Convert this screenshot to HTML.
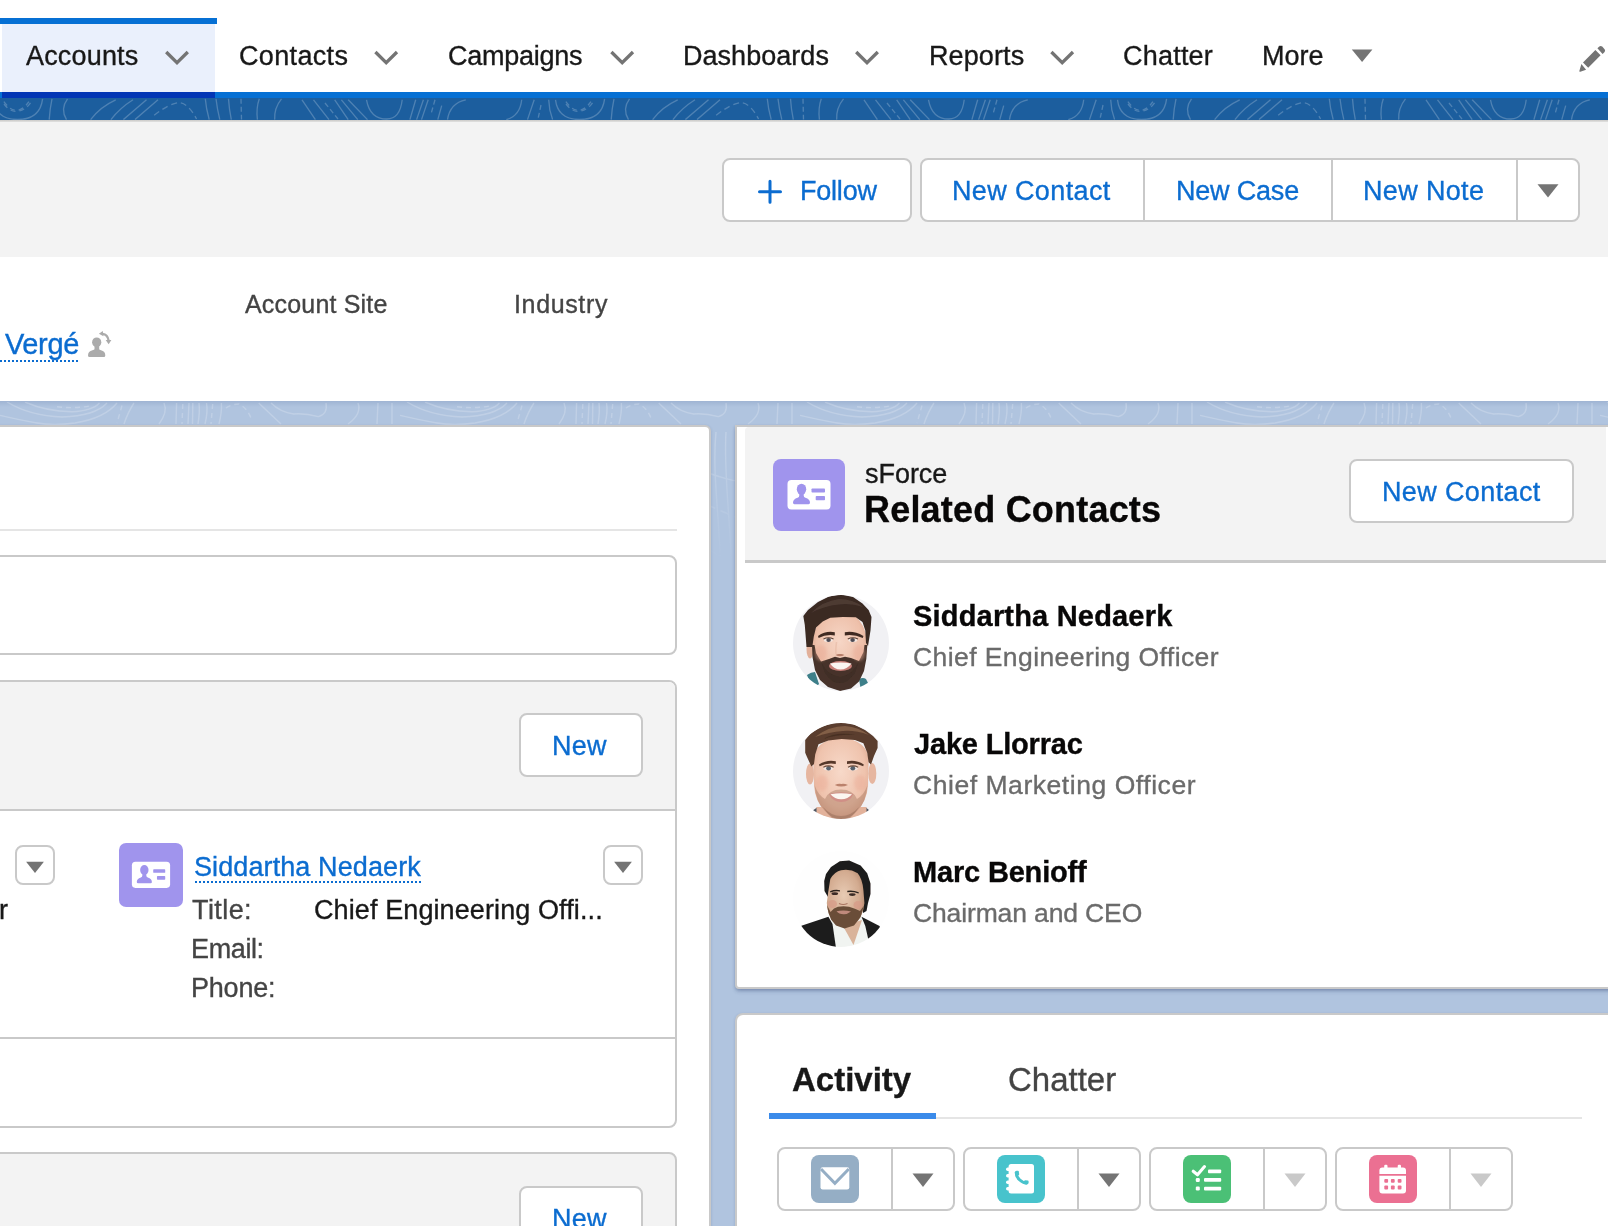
<!DOCTYPE html>
<html lang="en"><head><meta charset="utf-8"><title>sForce | Salesforce</title>
<style>
html,body{margin:0;padding:0}
body{width:1608px;height:1226px;overflow:hidden;position:relative;background:#b0c4df;font-family:"Liberation Sans",sans-serif}
.a{position:absolute;box-sizing:border-box}
.t{-webkit-text-stroke:0.35px;will-change:transform;position:absolute;white-space:nowrap;font-family:"Liberation Sans",sans-serif}
.btn{background:#fff;border:2px solid #c9c9c9;border-radius:8px}
.box{border:2px solid #c9c9c9;border-radius:8px;background:#fff}
svg{position:absolute;overflow:visible}
.dots{height:2px;background:repeating-linear-gradient(90deg,#0b6cd0 0 2px,transparent 2px 4px)}

</style></head>
<body>
<!-- nav -->
<div class="a" style="left:0;top:0;width:1608px;height:92px;background:#fff"></div>
<div class="a" style="left:2px;top:24px;width:213px;height:68px;background:#eaf0fc"></div>
<div class="a" style="left:0;top:18px;width:217px;height:6px;background:#0670d4"></div>
<div class="a" style="left:0;top:92px;width:1608px;height:6px;background:#0670d4"></div>
<div class="a" style="left:2px;top:92px;width:213px;height:6px;background:#0336b5"></div>
<div class="a" style="left:0;top:98px;width:1608px;height:22px;background:#1c5e9e"></div>
<div class="a" style="left:0;top:401px;width:1608px;height:6px;background:linear-gradient(#9fb4d3,#b0c4df)"></div>
<svg style="left:0;top:0" width="1608" height="1226"><defs>
<g id="topo" fill="none" stroke="#fff" stroke-width="1.300">
<path d="M3.900 3.700 Q16.400 21 28.900 3.700" stroke-dasharray="5 4"/>
<path d="M-6.500 1.800 Q-4 21.500 17.500 21.500 Q40 21.500 42.600 0.800 M555.500 1.800 Q558 21.500 579.500 21.500"/>
<path d="M52 0.800 Q50 10 49.200 21.600 M67.500 0.800 Q60 11 66.500 21.600"/>
<path d="M115.700 1.800 Q100 9 90.600 21.600 M133 1.800 Q120 10 110.900 21.600 M146.500 1.800 L123.400 21.600 M158 1.800 L135 21.600"/>
<path d="M154.200 17.200 Q170 5 179.300 4.700 Q188 5 196.600 21" stroke-dasharray="6 4"/>
<path d="M205.300 0.800 Q206 10 209.200 21.600 M216 0.800 Q217 10 219.800 21.600 M228.500 0.800 Q229 10 231.300 21.600 M259.300 0.800 Q256 10 257.400 21.600 M281.500 0.800 Q274 10 274.700 21.600"/>
<path d="M241 0.800 L241.500 21.600 M325 5 L338 21 M435 1.800 L431 16 M541 7 L538 21" stroke-dasharray="5 3"/>
<path d="M302 1.800 L315.400 21.600 M313.500 1.800 L329 21.600 M334.700 1.800 L348.200 21.600 M341.400 1.800 L357.800 21.600 M348.200 1.800 L367.500 21.600"/>
<path d="M366.500 1.800 Q370 21 386.800 21 Q400 21 402.200 1.800"/>
<path d="M415.700 1.800 L409.900 21.600 M423.400 1.800 L416.600 21.600 M428.200 1.800 L421.500 21.600 M441.700 7.600 L437.800 21.600"/>
<path d="M465.800 1.800 Q450 5 447.500 21.600 M521.700 1.800 Q520 18 506.300 21.600 M534.200 1.800 L527.500 21.600 M548.700 1.800 Q549 12 552.600 21.600"/>
<path d="M566 6 Q572 14 579.500 13.300 Q588 12 593 4 M4 6 Q10 14 17.500 13.300 Q26 12 31 4" stroke-dasharray="5 4"/>
</g>
<linearGradient id="fg" x1="0" y1="0" x2="0" y2="1"><stop offset="0" stop-color="#fff"/><stop offset="0.25" stop-color="#fff"/><stop offset="1" stop-color="#000"/></linearGradient><mask id="fade" maskUnits="userSpaceOnUse" x="0" y="402" width="1608" height="160"><rect x="0" y="402" width="1608" height="160" fill="url(#fg)"/></mask>
<pattern id="pt" x="0" y="98" width="562" height="22" patternUnits="userSpaceOnUse"><use href="#topo"/></pattern>
<pattern id="pt2" x="0" y="402" width="400" height="300" patternUnits="userSpaceOnUse"><g fill="none" stroke="#fff" stroke-width="1.400">
<path d="M7 0 Q30 14 62 15 Q95 14 107 1 M25 0 Q45 9 72 9.700 Q92 9 99.500 1 M0 13.400 Q20 18 37 21 T75 21 Q105 16 117 1"/>
<path d="M57 4.700 Q75 7 92 3.500 M122 3.500 L117 21 M182.800 2 L182 22 M212.700 2 L211 22 M226 6 Q232 2 239 2 Q247 6 251 16" stroke-dasharray="5 4"/>
<path d="M134 1 Q128 10 124 22 M164 1 Q168 10 159 22"/>
<path d="M176.600 1 L176 22 M189 1 L188 22 M192.800 1 L192.500 22 M199 1 Q200 10 198 22 M206.500 1 Q208 10 205 22 M221.400 1 Q222 10 219 22"/>
<path d="M258.700 1 L281 22 M271 1 Q280 10 293.500 12 Q305 11 318.400 14.700 Q328 12 326 1"/>
<path d="M358 1 Q362 12 348 22 M378 1 L377 22 M392 1 L392 22"/>
<path d="M0 60 C50 40 90 80 140 62 S230 40 290 64 S360 84 400 60"/>
<path d="M0 100 C40 84 100 124 150 100 S250 76 310 104 S370 120 400 100" stroke-dasharray="9 6"/>
<path d="M0 150 C60 120 100 176 170 150 S260 120 320 154 S370 170 400 150"/>
<path d="M0 200 C50 184 110 226 160 200 S250 170 310 204 S370 220 400 200"/>
<path d="M0 250 C60 226 100 276 170 250 S260 226 320 254 S370 270 400 250" stroke-dasharray="9 6"/>
<path d="M316 30 C310 90 330 160 318 300 M326 30 C322 90 340 160 329 300"/>
</g></pattern>
</defs>
<rect x="0" y="98" width="1608" height="22" fill="url(#pt)" opacity=".22"/>
<rect x="0" y="402" width="1608" height="160" fill="url(#pt2)" opacity=".2" mask="url(#fade)"/>
</svg>
<!-- header -->
<div class="a" style="left:0;top:120px;width:1608px;height:137px;background:#f3f3f3"></div>
<div class="a" style="left:0;top:120px;width:1608px;height:2px;background:linear-gradient(#cbc9c7,#e2e2e2)"></div>
<div class="a" style="left:0;top:257px;width:1608px;height:144px;background:#fff"></div>
<!-- nav chevrons -->
<svg style="left:0;top:0" width="1608" height="100" fill="none" stroke="#747474" stroke-width="3.300" stroke-linejoin="miter"><path d="M166.2 52 L177.0 62.600 L187.8 52"/><path d="M375.4 52 L386.2 62.600 L397.0 52"/><path d="M611.4 52 L622.2 62.600 L633.0 52"/><path d="M856.2 52 L867.0 62.600 L877.8 52"/><path d="M1051.4 52 L1062.2 62.600 L1073.0 52"/></svg>
<svg style="left:0;top:0" width="1608" height="100" fill="#747474"><path d="M1351.8 49.5 h20.6 l-10.3 12.5z"/>
<path d="M1583 62.400 L1595.400 50 L1600.600 55.200 L1588.200 67.800Z M1597.400 48.300 L1599.300 46.400 Q1600.800 45.300 1602.200 46.600 L1604.600 49.300 Q1605.600 50.700 1604.600 51.900 L1602.600 53.900Z M1581.400 64.100 L1586.100 69.800 L1580.300 71.700 Q1579 72 1579.400 70.700Z"/>
</svg>
<!-- header buttons -->
<div class="a btn" style="left:722px;top:158px;width:190px;height:64px"></div>
<div class="a btn" style="left:920px;top:158px;width:660px;height:64px"></div>
<div class="a" style="left:1143px;top:160px;width:2px;height:60px;background:#c9c9c9"></div>
<div class="a" style="left:1331px;top:160px;width:2px;height:60px;background:#c9c9c9"></div>
<div class="a" style="left:1516px;top:160px;width:2px;height:60px;background:#c9c9c9"></div>
<svg style="left:0;top:0" width="1608" height="260"><path d="M759.5 191.7 h21 M770 181.2 v21" stroke="#0b6cd0" stroke-width="3" stroke-linecap="round" fill="none"/>
<path d="M1537.5 184.2 h21 l-10.5 13.4z" fill="#747474"/></svg>
<!-- Vergé underline + icon -->
<div class="a dots" style="left:0;top:360px;width:80px"></div>
<svg style="left:0;top:0" width="130" height="370"><g fill="#ababab"><ellipse cx="96.700" cy="342.300" rx="4.600" ry="4.900"/><rect x="94.500" y="345" width="4.700" height="6"/><path d="M88 355.500 Q88 351.200 92.500 350.200 L95 349.200 L98.600 349.200 L101 350.200 Q105.300 351.200 105.300 355.500 Q105.300 357 103.800 357 L89.500 357 Q88 357 88 355.500Z"/><path d="M98.900 333.800 L102.800 331 L103.500 336.300Z"/><path d="M108.600 344.200 L105.700 340.100 L111.400 340.100Z"/></g><path d="M102.500 333.800 Q107.800 334.500 108.600 340.500" fill="none" stroke="#ababab" stroke-width="2.200"/></svg>
<!-- left card -->
<div class="a" style="left:-20px;top:425px;width:731px;height:830px;background:#fff;border:2px solid #c9c9c9;border-radius:6px;box-shadow:0 1px 3px rgba(40,60,110,.2)"></div>
<div class="a" style="left:0;top:529px;width:677px;height:2px;background:#e5e5e5"></div>
<div class="a box" style="left:-20px;top:555px;width:697px;height:100px"></div>
<div class="a box" style="left:-20px;top:680px;width:697px;height:448px;overflow:hidden"><div class="a" style="left:0;top:0;width:698px;height:129px;background:#f3f3f3;border-bottom:2px solid #c9c9c9"></div><div class="a" style="left:0;top:355px;width:698px;height:2px;background:#c9c9c9"></div></div>
<div class="a box" style="left:-20px;top:1152px;width:697px;height:200px;background:#f3f3f3"></div>
<div class="a btn" style="left:519px;top:713px;width:124px;height:64px"></div>
<div class="a btn" style="left:519px;top:1186px;width:124px;height:64px"></div>
<div class="a btn" style="left:15px;top:845px;width:40px;height:40px"></div>
<div class="a btn" style="left:603px;top:845px;width:40px;height:40px"></div>
<svg style="left:0;top:0" width="720" height="1226" fill="#747474"><path d="M26.100 861.700 h17.800 l-8.900 11.300z"/><path d="M614.100 861.700 h17.800 l-8.900 11.300z"/></svg>
<div class="a dots" style="left:195px;top:881px;width:226px"></div>
<!-- contact icon small -->
<svg style="left:119px;top:843px" width="64" height="64" viewBox="0 0 72 72"><use href="#cicon"/></svg>
<!-- right card 1 -->
<div class="a" style="left:735px;top:425px;width:900px;height:564px;background:#fff;border:2px solid #c9c9c9;border-radius:0 0 0 4px;box-shadow:0 1px 3px rgba(40,60,110,.2),0 3px 4px -1px rgba(40,60,110,.3)"></div>
<div class="a" style="left:745px;top:427px;width:861px;height:133px;background:#f3f3f3;border-top-left-radius:4px"></div>
<div class="a" style="left:745px;top:560px;width:861px;height:3px;background:#c9c9c9"></div>
<svg style="left:773px;top:459px" width="72" height="72" viewBox="0 0 72 72"><defs><g id="cicon"><rect width="72" height="72" rx="8" fill="#a094ed"/><rect x="14.5" y="21" width="43" height="29.5" rx="4" fill="#fff"/><g fill="#a094ed"><ellipse cx="28.500" cy="30.300" rx="4.700" ry="5.600"/><path d="M20 43.800 q0 -3.600 4.600 -5 q1.700 -0.500 1.700 -2.400 v-2 h4.400 v2 q0 1.900 1.700 2.400 q4.600 1.400 4.600 5 q0 1.400 -1.400 1.400 h-14.200 q-1.400 0 -1.400 -1.400z"/><rect x="38.500" y="29.500" width="13.500" height="4.100" rx="0.800"/><rect x="42.700" y="37.100" width="9.300" height="4.200" rx="0.800"/></g></g></defs><use href="#cicon"/></svg>
<div class="a btn" style="left:1349px;top:459px;width:225px;height:64px"></div>
<svg style="left:0;top:0" width="0" height="0"><defs>
<clipPath id="cc"><circle cx="48" cy="48" r="48"/></clipPath>
<filter id="b1" x="-20%" y="-20%" width="140%" height="140%"><feGaussianBlur stdDeviation="0.9"/></filter>
<filter id="b2" x="-30%" y="-30%" width="160%" height="160%"><feGaussianBlur stdDeviation="1.8"/></filter>
<filter id="b05" x="-20%" y="-20%" width="140%" height="140%"><feGaussianBlur stdDeviation="0.7"/></filter>
<radialGradient id="sk1" cx="50%" cy="45%" r="60%"><stop offset="0" stop-color="#f6d6c6"/><stop offset="0.7" stop-color="#eec0aa"/><stop offset="1" stop-color="#d9a38b"/></radialGradient>
<radialGradient id="sk2" cx="50%" cy="42%" r="62%"><stop offset="0" stop-color="#f7d9c9"/><stop offset="0.7" stop-color="#efc3ad"/><stop offset="1" stop-color="#dba58d"/></radialGradient>
<radialGradient id="sk3" cx="45%" cy="45%" r="60%"><stop offset="0" stop-color="#e8cbb4"/><stop offset="0.7" stop-color="#d3ab90"/><stop offset="1" stop-color="#b98d72"/></radialGradient>
</defs></svg>
<!-- avatar 1 -->
<svg style="left:793px;top:595px" width="96" height="96" viewBox="0 0 96 96">
<g clip-path="url(#cc)"><rect width="96" height="96" fill="#f1f1f4"/>
<g filter="url(#b05)">
<path d="M14 80 q4 -3 8 -3 l4 12 l-6 6z" fill="#3c7f89"/><path d="M66 84 q4 -2 7 0 l3 6 l-8 6z" fill="#3c7f89"/>
<ellipse cx="17" cy="54" rx="3.500" ry="9.500" fill="#e2b09a"/>
<ellipse cx="46.800" cy="50" rx="27.500" ry="35" fill="url(#sk1)"/>
<!-- beard -->
<path d="M19 50 L19.500 62 L22 75 L27 85 L35 92 L47 96 L58 93.500 L66 86.500 L71 76 L73.300 64 L74.300 50 L71.500 50 L70.500 57 L66 66 L58 63 L52 61.800 L47 63 L42 61.800 L36 64 L28 66.500 L23 58 L21.500 50 Z" fill="#46332a"/>
<path d="M28 66.500 Q34 80 47 82 Q60 80 66 66 L62 78 Q55 88 47 88 Q38 88 32 78 Z" fill="#3f2d25"/>
<!-- mouth -->
<ellipse cx="47.500" cy="71" rx="11.500" ry="5" fill="#c77f78"/>
<path d="M37 68.500 Q47.500 66.500 58.500 68.500 Q54 74.500 47.500 74.500 Q41 74.500 37 68.500Z" fill="#fbf6f2"/>
<!-- hair -->
<path d="M13.500 52 L11.800 30 L10.300 21 L15 15 L25 7 L36 1.500 L48 -0.500 L60 2 L69.500 8.400 L75.600 15 L78.500 22 L77.500 35.400 L75 51 L73 48 L72.300 35.400 L69.500 27 L62.800 22.300 L50 22 L37.300 22.800 L29.700 26.400 L23 32.600 L20.700 42 L19.300 52 Z" fill="#3a2a23"/>
<path d="M18 18 Q30 6 46 4 Q60 4 70 12 Q58 8 46 9.500 Q30 11 18 18Z" fill="#57413a" opacity=".7"/>
<!-- brows -->
<ellipse cx="28" cy="58" rx="6" ry="8" fill="#e9a994" opacity=".45" filter="url(#b2)"/><ellipse cx="66" cy="58" rx="6" ry="8" fill="#e9a994" opacity=".45" filter="url(#b2)"/>
<path d="M25 41 Q33 35.500 41.800 37.300 L41.800 40.400 Q33 39 25.600 43 Z" fill="#3f2c24"/>
<path d="M51.800 37.300 Q61 35.500 70.400 41 L69.800 43 Q61 39 51.800 40.400 Z" fill="#3f2c24"/>
<ellipse cx="35.400" cy="45" rx="4.600" ry="2.100" fill="#f3e6e0"/><ellipse cx="59.800" cy="45" rx="4.600" ry="2.100" fill="#f3e6e0"/>
<ellipse cx="35.600" cy="45" rx="2.300" ry="2.100" fill="#4c4a52"/><ellipse cx="59.600" cy="45" rx="2.300" ry="2.100" fill="#4c4a52"/>
<path d="M30.500 44 Q35.400 41.500 40.500 44" stroke="#5a4036" stroke-width="1.100" fill="none"/><path d="M54.800 44 Q59.800 41.500 65 44" stroke="#5a4036" stroke-width="1.100" fill="none"/>
<!-- nose -->
<path d="M42.500 60 Q47 62.500 51.500 60 Q49 58.500 47 59 Q45 58.500 42.500 60Z" fill="#b57d68"/>
<path d="M43.500 47 Q42.500 55 43 59" stroke="#e3b39e" stroke-width="1.500" fill="none" opacity=".5"/>
</g></g></svg>
<!-- avatar 2 -->
<svg style="left:793px;top:723px" width="96" height="96" viewBox="0 0 96 96">
<g clip-path="url(#cc)"><rect width="96" height="96" fill="#f1f1f4"/>
<g filter="url(#b05)">
<path d="M19 88 l5 -3.500 l2 12 h-8z" fill="#4d5561"/><path d="M77 88 l-4 -3.500 l-2 12 h8z" fill="#4d5561"/>
<ellipse cx="17" cy="51" rx="4" ry="10.500" fill="#e6b6a0"/><ellipse cx="79.300" cy="50.500" rx="4" ry="10.500" fill="#e6b6a0"/>
<path d="M23.500 84 L23.500 100 L73.500 100 L73.500 84Z" fill="#e2b29b"/>
<path d="M20.300 40 Q19 18 48 14 Q77 18 75.600 40 L75 62 Q74 78 64 88 Q56 96 48 96 Q40 96 32 88 Q22 78 21 62 Z" fill="url(#sk2)"/>
<!-- stubble -->
<path d="M21.500 62 Q23 80 32 88 Q40 96.500 48 96.500 Q56 96.500 64 88 Q73 80 74.500 62 Q71 72 64 76 Q60 66.500 48 66.500 Q36 66.500 32 76 Q25 72 21.500 62Z" fill="#9a6f58" opacity=".38"/>
<path d="M30 84 Q38 93 48 93 Q58 93 66 84 Q58 98 48 98 Q38 98 30 84Z" fill="#7d5a48" opacity=".35"/>
<!-- mouth -->
<path d="M36 71 Q48 67.500 60.500 71 Q57 79 48.200 79 Q39.500 79 36 71Z" fill="#d08f86"/>
<path d="M37.500 71.200 Q48 69.300 59 71.200 Q55 76.300 48.200 76.300 Q41.500 76.300 37.500 71.200Z" fill="#fbf6f0"/>
<!-- hair -->
<path d="M18.400 43.500 L14 34 L12.200 29.700 L12.200 17 L18 10 L28 4 L40 0 L48 -0.500 L60 1 L72 7 L80 13 L84.600 18 L84.600 25 L81 33 L78 41.500 L75.600 39.200 L74.200 29.700 L70.400 20.300 L61.900 17 L48.700 16 L35.400 17.400 L25.500 21.200 L22.200 31.600 L21 41 Z" fill="#5a3d2d"/>
<path d="M22 14 Q36 3 52 3 Q66 4 76 12 Q62 7 50 8 Q36 9 22 14Z" fill="#8c664c" opacity=".8"/>
<path d="M30 16 Q44 8 62 12 Q46 11 30 16Z" fill="#3e2a20" opacity=".7"/>
<!-- brows -->
<ellipse cx="29" cy="60" rx="6" ry="8" fill="#eaa792" opacity=".4" filter="url(#b2)"/><ellipse cx="67" cy="60" rx="6" ry="8" fill="#eaa792" opacity=".4" filter="url(#b2)"/>
<path d="M26 41.400 Q34 36.300 42.800 38.200 L42.800 41 Q34 39.600 26.600 43.200Z" fill="#56392b"/>
<path d="M54 38.200 Q63 36.300 70.800 41.400 L70.200 43.200 Q63 39.600 54 41Z" fill="#56392b"/>
<ellipse cx="35.400" cy="45.200" rx="4.800" ry="2.200" fill="#f3e6e0"/><ellipse cx="60" cy="45.200" rx="4.800" ry="2.200" fill="#f3e6e0"/>
<ellipse cx="35.600" cy="45.200" rx="2.400" ry="2.200" fill="#56606c"/><ellipse cx="59.800" cy="45.200" rx="2.400" ry="2.200" fill="#56606c"/>
<path d="M30.400 44.200 Q35.400 41.600 40.600 44.200" stroke="#6a4a3a" stroke-width="1.100" fill="none"/><path d="M55 44.200 Q60 41.600 65.200 44.200" stroke="#6a4a3a" stroke-width="1.100" fill="none"/>
<!-- nose -->
<path d="M41.800 62 Q48 65 55 62 Q51 60.300 48.400 61 Q45.500 60.300 41.800 62Z" fill="#bb826c"/>
</g></g></svg>
<!-- avatar 3 -->
<svg style="left:793px;top:851px" width="96" height="96" viewBox="0 0 96 96">
<g clip-path="url(#cc)"><rect width="96" height="96" fill="#fefefe"/>
<g filter="url(#b05)">
<!-- shirt -->
<path d="M38 68 L43 97 L76 93 L73 72 L68.500 65.700Z" fill="#f1f4f1"/>
<path d="M50 75 L60.500 94 L69 69Z" fill="#d9b39a"/>
<!-- suit -->
<path d="M8.400 74.700 L35.400 65.700 L39.500 73 L43 97 L0 97 Z" fill="#1d1d1d"/>
<path d="M68.500 65.700 L86.500 75.100 L96 97 L78 97 L75.100 87.400 L72.300 75.100Z" fill="#1d1d1d"/>
<!-- hair -->
<path d="M31.500 40 L31.200 30 L33 23 L38 16 L46.800 10.300 L56.200 9.400 L67.600 14.600 L74.200 22.200 L77.500 32.600 L77.500 43 L75 52 L73.500 60 L70 62 L68 40 L36 40 L35 46 Z" fill="#1f1d1b"/>
<!-- face -->
<path d="M35.400 40 L37.300 28 Q42 20.300 48 19.300 Q57 17.500 64.700 22.200 Q69.500 28 70.400 39.200 L71.400 52 Q70 66 62 73 Q52 79 43 73 Q34 64 33.800 52 Z" fill="url(#sk3)"/>
<ellipse cx="39.500" cy="53" rx="4.500" ry="4" fill="#d79a88" opacity=".7"/><ellipse cx="65" cy="54" rx="4.500" ry="4" fill="#d79a88" opacity=".7"/>
<!-- beard -->
<path d="M34 54 L35.500 62 L38 68.500 L43 74.500 L51.500 77.500 L61 74.500 L67.600 66 L70.800 55 L67 60 L62 57.800 L56 55.800 L50.500 55.300 L45 55.800 L41 57.400 L37.500 61 Z" fill="#6a4e39"/>
<path d="M43.500 60.300 Q50.500 58.800 58 60.500 Q54 63.500 50.500 63.300 Q46 63.300 43.500 60.300Z" fill="#c08a7c"/>
<!-- brows/eyes -->
<path d="M37 40.200 Q42 38 47 39.200 L47 40.600 Q42 39.800 37.400 41.600Z" fill="#2a221d"/>
<path d="M54.300 39.800 Q60 38.800 65.800 41.200 L65.500 42.400 Q60 40.400 54.300 41.200Z" fill="#2a221d"/>
<ellipse cx="41.800" cy="42.700" rx="3.300" ry="1.400" fill="#3a2c25"/><ellipse cx="59.300" cy="43.600" rx="3.300" ry="1.400" fill="#3a2c25"/>
<path d="M46 52.500 Q50 54.500 54.500 52.500" stroke="#a87562" stroke-width="1.200" fill="none"/>
</g></g></svg>

<!-- right card 2 -->
<div class="a" style="left:735px;top:1013px;width:900px;height:300px;background:#fff;border:2px solid #c9c9c9;border-radius:8px;box-shadow:0 1px 3px rgba(40,60,110,.2)"></div>
<div class="a" style="left:769px;top:1117px;width:813px;height:2px;background:#e5e5e5"></div>
<div class="a" style="left:769px;top:1113px;width:167px;height:6px;background:#3b8bea"></div>
<!-- activity buttons -->
<div class="a btn" style="left:777px;top:1147px;width:178px;height:64px"></div><div class="a" style="left:891px;top:1149px;width:2px;height:60px;background:#c9c9c9"></div>
<div class="a btn" style="left:963px;top:1147px;width:178px;height:64px"></div><div class="a" style="left:1077px;top:1149px;width:2px;height:60px;background:#c9c9c9"></div>
<div class="a btn" style="left:1149px;top:1147px;width:178px;height:64px"></div><div class="a" style="left:1263px;top:1149px;width:2px;height:60px;background:#c9c9c9"></div>
<div class="a btn" style="left:1335px;top:1147px;width:178px;height:64px"></div><div class="a" style="left:1449px;top:1149px;width:2px;height:60px;background:#c9c9c9"></div>
<svg style="left:0;top:0" width="1608" height="1226"><g fill="#747474"><path d="M912.500 1173.500 h21 l-10.500 13.500z"/><path d="M1098.500 1173.500 h21 l-10.500 13.500z"/></g><g fill="#c9c9c9"><path d="M1284.500 1173.500 h21 l-10.500 13.500z"/><path d="M1470.500 1173.500 h21 l-10.500 13.500z"/></g>
<rect x="811" y="1155" width="48" height="48" rx="8" fill="#95aec5"/>
<rect x="820.500" y="1167.300" width="28.800" height="22.200" rx="2.200" fill="#fff"/>
<path d="M821 1169 L834.900 1183.300 L848.800 1169" fill="none" stroke="#95aec5" stroke-width="3"/>
<rect x="997" y="1155" width="48" height="48" rx="8" fill="#48c3cc"/>
<rect x="1008.600" y="1164" width="25.400" height="29.500" rx="2.500" fill="#fff"/>
<g fill="#fff"><rect x="1006" y="1167.600" width="4.500" height="3.400" rx="1.700"/><rect x="1006" y="1174" width="4.500" height="3.400" rx="1.700"/><rect x="1006" y="1180.500" width="4.500" height="3.400" rx="1.700"/><rect x="1006" y="1187" width="4.500" height="3.400" rx="1.700"/></g>
<path d="M1016.200 1172.600 Q1016.200 1176.500 1019.500 1179.800 Q1022.800 1183 1026.800 1183.200" fill="none" stroke="#48c3cc" stroke-width="3"/>
<path d="M1014.800 1172.800 Q1014.600 1171 1016.600 1170.800 L1017.800 1170.800 Q1018.600 1170.800 1018.800 1171.600 L1019.200 1174 Q1019.300 1174.700 1018.600 1175.200 L1015.600 1176.400 Z" fill="#48c3cc"/>
<path d="M1026.600 1184.600 Q1028.400 1184.800 1028.600 1182.800 L1028.600 1181.600 Q1028.600 1180.800 1027.800 1180.600 L1025.400 1180.200 Q1024.700 1180.100 1024.200 1180.800 L1023 1183.800 Z" fill="#48c3cc"/>
<rect x="1183" y="1155" width="48" height="48" rx="8" fill="#4bc076"/>
<path d="M1193.200 1171.200 L1197.500 1174.800 L1204.500 1166.600" fill="none" stroke="#fff" stroke-width="3.100" stroke-linecap="round" stroke-linejoin="round"/>
<g fill="#fff"><rect x="1208" y="1169.600" width="13.200" height="3.700" rx="1"/><rect x="1204" y="1178.100" width="17.200" height="3.700" rx="1"/><rect x="1204" y="1186.700" width="17.200" height="3.700" rx="1"/><rect x="1195.800" y="1178" width="4" height="4" rx="1.200"/><rect x="1195.800" y="1186.500" width="4" height="4" rx="1.200"/></g>
<rect x="1369" y="1155" width="48" height="48" rx="8" fill="#eb7092"/>
<g fill="#fff"><path d="M1379.400 1174.100 v-3.500 q0 -3 3 -3 h20.600 q3 0 3 3 v3.500z"/><rect x="1384.200" y="1164.700" width="3.300" height="5" rx="1.200"/><rect x="1397.700" y="1164.700" width="3.300" height="5" rx="1.200"/><path d="M1379.400 1175.700 h26.600 v14.800 q0 3 -3 3 h-20.600 q-3 0 -3 -3z"/></g>
<g fill="#eb7092"><rect x="1384.3" y="1179.0" width="3.800" height="3.800" rx="1"/><rect x="1390.9" y="1179.0" width="3.800" height="3.800" rx="1"/><rect x="1397.7" y="1179.0" width="3.800" height="3.800" rx="1"/><rect x="1384.3" y="1185.6" width="3.800" height="3.800" rx="1"/><rect x="1390.9" y="1185.6" width="3.800" height="3.800" rx="1"/><rect x="1397.7" y="1185.6" width="3.800" height="3.800" rx="1"/></g>
</svg>

<span class="t" id="t0" style="left:26.4px;top:43px;font-size:27px;line-height:27px;font-weight:400;color:#181818;letter-spacing:0.171px;">Accounts</span>
<span class="t" id="t1" style="left:238.8px;top:43px;font-size:27px;line-height:27px;font-weight:400;color:#181818;letter-spacing:0.343px;">Contacts</span>
<span class="t" id="t2" style="left:448.2px;top:43px;font-size:27px;line-height:27px;font-weight:400;color:#181818;letter-spacing:-0.262px;">Campaigns</span>
<span class="t" id="t3" style="left:682.8px;top:43px;font-size:27px;line-height:27px;font-weight:400;color:#181818;letter-spacing:0.033px;">Dashboards</span>
<span class="t" id="t4" style="left:928.6px;top:43px;font-size:27px;line-height:27px;font-weight:400;color:#181818;letter-spacing:0.100px;">Reports</span>
<span class="t" id="t5" style="left:1123.4px;top:43px;font-size:27px;line-height:27px;font-weight:400;color:#181818;letter-spacing:0.217px;">Chatter</span>
<span class="t" id="t6" style="left:1262.0px;top:43px;font-size:27px;line-height:27px;font-weight:400;color:#181818;letter-spacing:0.000px;">More</span>
<span class="t" id="t7" style="left:800.0px;top:178px;font-size:27px;line-height:27px;font-weight:400;color:#0b6cd0;letter-spacing:-0.220px;">Follow</span>
<span class="t" id="t8" style="left:952.4px;top:178px;font-size:27px;line-height:27px;font-weight:400;color:#0b6cd0;letter-spacing:0.370px;">New Contact</span>
<span class="t" id="t9" style="left:1176.2px;top:178px;font-size:27px;line-height:27px;font-weight:400;color:#0b6cd0;letter-spacing:-0.200px;">New Case</span>
<span class="t" id="t10" style="left:1363.4px;top:178px;font-size:27px;line-height:27px;font-weight:400;color:#0b6cd0;letter-spacing:0.343px;">New Note</span>
<span class="t" id="t11" style="left:244.8px;top:292px;font-size:25px;line-height:25px;font-weight:400;color:#444444;letter-spacing:0.182px;">Account Site</span>
<span class="t" id="t12" style="left:514.0px;top:292px;font-size:25px;line-height:25px;font-weight:400;color:#444444;letter-spacing:0.643px;">Industry</span>
<span class="t" id="t13" style="left:4.8px;top:330px;font-size:29px;line-height:29px;font-weight:400;color:#0b6cd0;letter-spacing:-0.375px;">Vergé</span>
<span class="t" id="t14" style="left:552.0px;top:733px;font-size:27px;line-height:27px;font-weight:400;color:#0b6cd0;letter-spacing:0.250px;">New</span>
<span class="t" id="t15" style="left:552.0px;top:1206px;font-size:27px;line-height:27px;font-weight:400;color:#0b6cd0;letter-spacing:0.250px;">New</span>
<span class="t" id="t16" style="left:194.0px;top:854px;font-size:27px;line-height:27px;font-weight:400;color:#0b6cd0;letter-spacing:0.100px;">Siddartha Nedaerk</span>
<span class="t" id="t17" style="left:191.8px;top:897px;font-size:27px;line-height:27px;font-weight:400;color:#444444;letter-spacing:0.420px;">Title:</span>
<span class="t" id="t18" style="left:191.2px;top:936px;font-size:27px;line-height:27px;font-weight:400;color:#444444;letter-spacing:-0.380px;">Email:</span>
<span class="t" id="t19" style="left:191.0px;top:975px;font-size:27px;line-height:27px;font-weight:400;color:#444444;letter-spacing:-0.200px;">Phone:</span>
<span class="t" id="t20" style="left:314.4px;top:897px;font-size:27px;line-height:27px;font-weight:400;color:#181818;letter-spacing:0.104px;">Chief Engineering Offi...</span>
<span class="t" id="t21" style="left:-1.5px;top:897px;font-size:27px;line-height:27px;font-weight:400;color:#181818;letter-spacing:0.000px;">r</span>
<span class="t" id="t22" style="left:864.8px;top:461px;font-size:27px;line-height:27px;font-weight:400;color:#181818;letter-spacing:-0.040px;">sForce</span>
<span class="t" id="t23" style="left:864.0px;top:492px;font-size:36px;line-height:36px;font-weight:700;color:#080707;letter-spacing:0.200px;">Related Contacts</span>
<span class="t" id="t24" style="left:1382.0px;top:479px;font-size:27px;line-height:27px;font-weight:400;color:#0b6cd0;letter-spacing:0.370px;">New Contact</span>
<span class="t" id="t25" style="left:912.8px;top:602px;font-size:29px;line-height:29px;font-weight:700;color:#080707;letter-spacing:0.188px;">Siddartha Nedaerk</span>
<span class="t" id="t26" style="left:913.0px;top:644px;font-size:26.5px;line-height:26.5px;font-weight:400;color:#6b6b6b;letter-spacing:0.417px;">Chief Engineering Officer</span>
<span class="t" id="t27" style="left:913.8px;top:730px;font-size:29px;line-height:29px;font-weight:700;color:#080707;letter-spacing:-0.182px;">Jake Llorrac</span>
<span class="t" id="t28" style="left:913.0px;top:772px;font-size:26.5px;line-height:26.5px;font-weight:400;color:#6b6b6b;letter-spacing:0.545px;">Chief Marketing Officer</span>
<span class="t" id="t29" style="left:913.0px;top:858px;font-size:29px;line-height:29px;font-weight:700;color:#080707;letter-spacing:-0.173px;">Marc Benioff</span>
<span class="t" id="t30" style="left:913.0px;top:900px;font-size:26.5px;line-height:26.5px;font-weight:400;color:#6b6b6b;letter-spacing:-0.133px;">Chairman and CEO</span>
<span class="t" id="t31" style="left:792.4px;top:1063px;font-size:33px;line-height:33px;font-weight:700;color:#181818;letter-spacing:0.000px;">Activity</span>
<span class="t" id="t32" style="left:1008.2px;top:1063px;font-size:33px;line-height:33px;font-weight:400;color:#444444;letter-spacing:0.000px;">Chatter</span>
</body></html>
